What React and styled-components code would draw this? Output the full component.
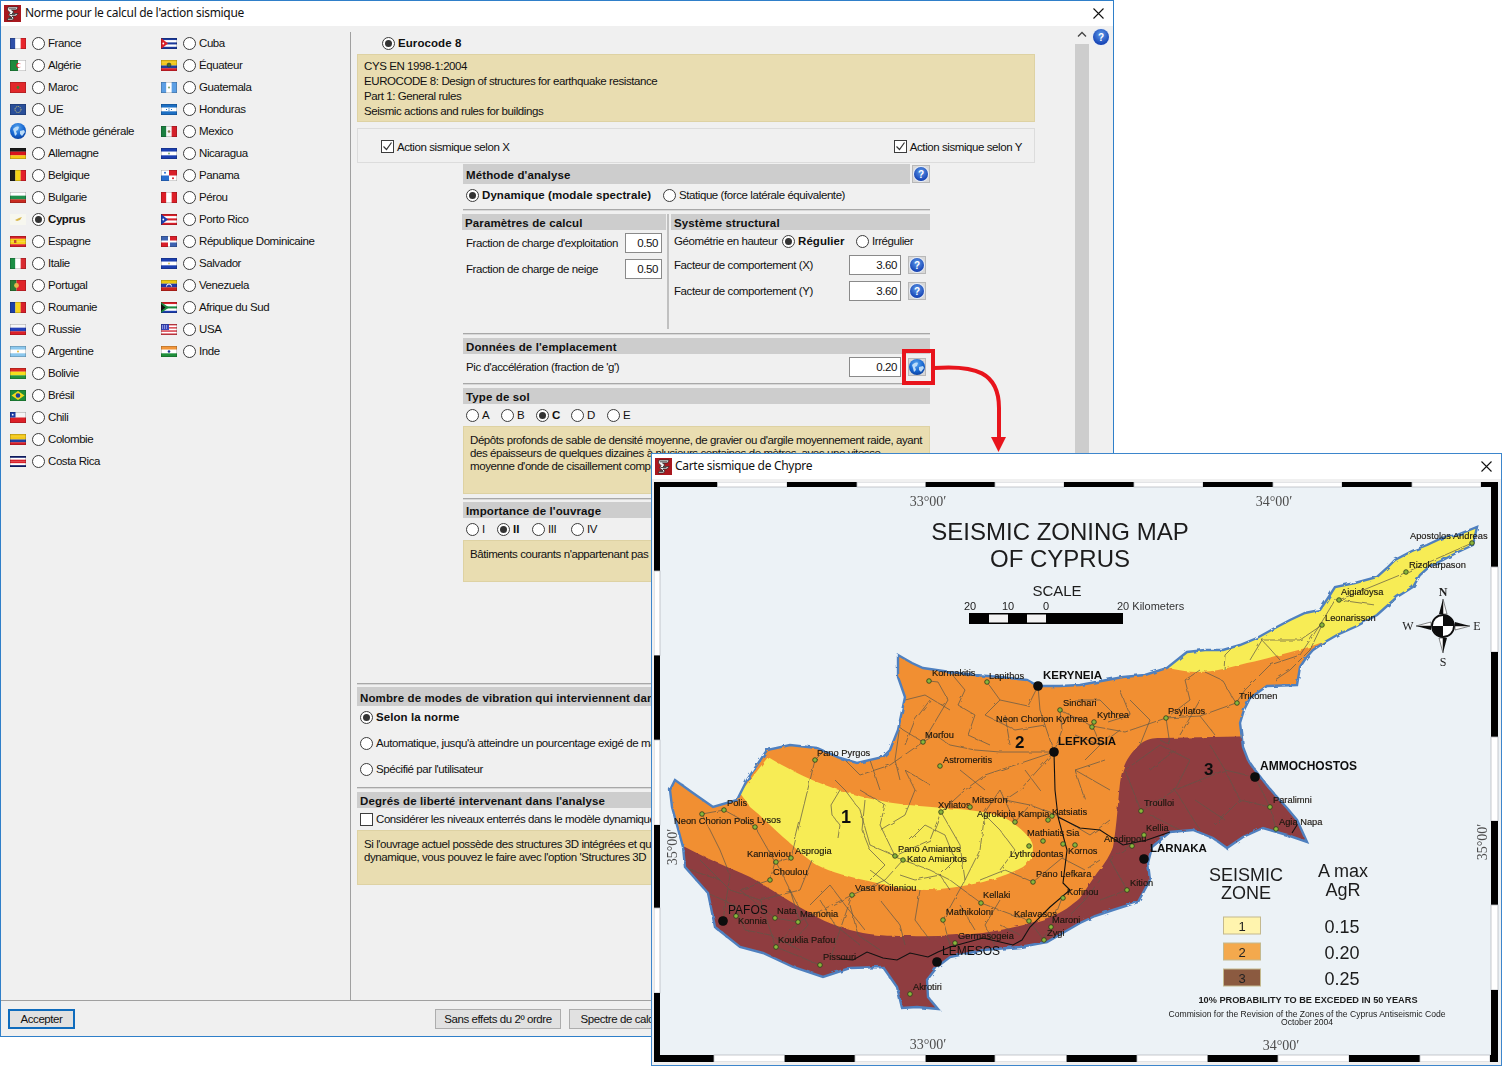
import React from 'react';
import styled, { createGlobalStyle } from 'styled-components';

const GlobalStyle = createGlobalStyle`
	html, body {
		margin: 0;
		padding: 0;
		background: #fff;
	}
	* {
		box-sizing: border-box;
	}
`;

const uiFont = `'Liberation Sans', Arial, sans-serif`;

const Desktop = styled.div`
	position: relative;
	width: 1502px;
	height: 1066px;
	overflow: hidden;
	background: #fff;
	font-family: ${uiFont};
	font-size: 11.5px;
	letter-spacing: -0.42px;
	color: #111;
`;
const MainWindow = styled.div`
	width: 1114px;
	height: 1037px;
	display: flex;
	flex-direction: column;
	border: 1px solid #2f7fc9;
	background: #f0f0f0;
`;
const TitleBar = styled.div`
	flex: none;
	height: ${(p) => p.$h}px;
	display: flex;
	align-items: center;
	gap: ${(p) => p.$gap ?? 4}px;
	padding: 0 ${(p) => p.$pr}px 0 3px;
	background: #fff;
`;
const TitleText = styled.div`
	flex: 1;
	padding-bottom: 2px;
	font-family: 'Noto Sans', sans-serif;
	font-size: 12px;
	letter-spacing: -0.3px;
	color: #111;
`;
const Body = styled.div`
	flex: 1;
	display: flex;
	min-height: 0;
`;
const CountryPane = styled.div`
	flex: none;
	width: 350px;
	margin-top: 6px;
	padding-left: 9px;
	display: flex;
	border-right: 1px solid #a0a0a0;
`;
const CountryColumn = styled.div`
	width: 151px;
	display: flex;
	flex-direction: column;
`;
const FlagBox = styled.svg`
	flex: none;
	width: 16px;
	height: ${(p) => p.$h}px;
	margin: 0;
`;
const ChoiceLabel = styled.label`
	flex: none;
	display: flex;
	align-items: center;
	gap: 3px;
	width: ${(p) => (p.$w ? `${p.$w}px` : 'auto')};
	font-weight: ${(p) => (p.$on ? 700 : 400)};
	letter-spacing: ${(p) => (p.$on ? '0.08px' : 'inherit')};
	white-space: nowrap;
`;
const CountryRow = styled.div`
	height: 22px;
	display: flex;
	align-items: center;
	gap: 6px;
	white-space: nowrap;
	${ChoiceLabel} {
		letter-spacing: -0.42px;
	}
`;
const RadioDot = styled.span`
	flex: none;
	position: relative;
	width: 13px;
	height: 13px;
	border: 1px solid #3c3c3c;
	border-radius: 50%;
	background: #fff;
	&::after {
		content: '';
		display: ${(p) => (p.$on ? 'block' : 'none')};
		position: absolute;
		inset: 2px;
		border-radius: 50%;
		background: #333;
	}
`;
const CheckBoxBox = styled.span`
	flex: none;
	width: 13px;
	height: 13px;
	border: 1px solid #3c3c3c;
	background: #fff;
	display: flex;
`;
const SettingsPane = styled.div`
	flex: 1;
	min-width: 0;
	display: flex;
`;
const Content = styled.div`
	width: 724px;
	flex: none;
	padding-top: 6px;
	overflow: hidden;
`;
const NormRow = styled.div`
	height: 22px;
	padding-left: 31px;
	display: flex;
	align-items: center;
`;
const Note = styled.div`
	height: ${(p) => p.$h}px;
	padding: ${(p) => p.$top ?? 7}px 6px 0;
	background: #e9ddb1;
	border: 1px solid #ded2a3;
	line-height: ${(p) => p.$line ?? 13}px;
	white-space: pre-line;
`;
const Wide = styled.div`
	margin-left: 6px;
	width: 678px;
`;
const DirectionBox = styled.div`
	height: 35px;
	margin-top: 6px;
	padding: 2px 12px 0 23px;
	display: flex;
	align-items: center;
	justify-content: space-between;
	border: 1px solid #dcdcdc;
`;
const CheckLabel = styled.label`
	display: flex;
	align-items: center;
	gap: 3px;
	white-space: nowrap;
`;
const Center = styled.div`
	margin: 1px 0 0 112px;
	width: 467px;
`;
const HeaderRow = styled.div`
	display: flex;
	align-items: center;
	gap: 2px;
`;
const Section = styled.div`
	flex: 1;
	height: ${(p) => p.$h ?? 16}px;
	padding: 2px 0 0 3px;
	display: flex;
	align-items: center;
	background: #cdcdcd;
	font-weight: 700;
	letter-spacing: 0.12px;
	white-space: nowrap;
	overflow: hidden;
`;
const ChoiceRow = styled.div`
	height: ${(p) => p.$h ?? 22}px;
	margin-top: ${(p) => p.$mt ?? 0}px;
	padding-left: ${(p) => p.$pl ?? 3}px;
	display: flex;
	align-items: center;
`;
const Rule = styled.div`
	height: 2px;
	margin-top: ${(p) => p.$mt}px;
	margin-bottom: ${(p) => p.$mb}px;
	background: #a8a8a8;
	border-bottom: 1px solid #d8d8d8;
`;
const TwoColumns = styled.div`
	height: 115px;
	display: flex;
`;
const LeftColumn = styled.div`
	width: 204px;
	margin-left: -1px;
`;
const RightColumn = styled.div`
	flex: 1;
	margin-left: 1px;
	padding-left: 2px;
	border-left: 2px solid #c0c0c0;
`;
const Field = styled.div`
	height: 20px;
	margin-top: ${(p) => p.$mt}px;
	padding: 0 4px 0 ${(p) => p.$pl}px;
	display: flex;
	align-items: center;
	white-space: nowrap;
`;
const FieldLabel = styled.span`
	flex: 1;
`;
const ValueInput = styled.div`
	flex: none;
	width: ${(p) => p.$w}px;
	height: 20px;
	padding-right: 3px;
	display: flex;
	align-items: center;
	justify-content: flex-end;
	background: #fff;
	border: 1px solid #8a8a8a;
`;
const IconButton = styled.button`
	flex: none;
	position: relative;
	width: 18px;
	height: 18px;
	margin-left: ${(p) => p.$ml ?? 0}px;
	padding: 0;
	display: flex;
	align-items: center;
	justify-content: center;
	background: #d8d8d8;
	border: 1px solid #b8b8b8;
`;
const HelpDisc = styled.span`
	width: ${(p) => p.$size ?? 14}px;
	height: ${(p) => p.$size ?? 14}px;
	border-radius: 50%;
	display: flex;
	align-items: center;
	justify-content: center;
	background: radial-gradient(circle at 50% 35%, #5f9bea, #1542b4 75%);
	box-shadow: 0 0 0 1px #e8eef8;
	color: #fff;
	font-size: 10px;
	font-weight: 700;
	letter-spacing: 0;
`;
const Highlight = styled.span`
	position: absolute;
	left: -7px;
	top: -10px;
	width: 33px;
	height: 36px;
	border: 4px solid #e8141c;
`;
const ScrollBar = styled.div`
	flex: none;
	width: 14px;
	padding-top: 18px;
	position: relative;
`;
const ScrollThumb = styled.div`
	height: 100%;
	background: #cdcdcd;
`;
const ScrollArrow = styled.svg`
	position: absolute;
	top: 5px;
	left: 2px;
`;
const SidePane = styled.div`
	flex: 1;
	padding: 3px 0 0 4px;
`;
const Footer = styled.div`
	flex: none;
	height: 36px;
	padding-left: 7px;
	display: flex;
	align-items: center;
	border-top: 1px solid #a0a0a0;
`;
const FooterButton = styled.button`
	flex: none;
	width: ${(p) => p.$w}px;
	height: 20px;
	margin-left: ${(p) => p.$ml ?? 0}px;
	padding: 0;
	background: #e1e1e1;
	border: ${(p) => (p.$primary ? '2px solid #0f6cbd' : '1px solid #adadad')};
	font: inherit;
	letter-spacing: inherit;
	color: #111;
`;
const ArrowLayer = styled.svg`
	position: absolute;
	left: 930px;
	top: 360px;
`;
const MapWindow = styled.div`
	position: absolute;
	left: 651px;
	top: 453px;
	width: 851px;
	height: 613px;
	border: 1px solid #3d86cc;
	background: #f0f0f0;
`;
const MapPane = styled.div`
	padding: 3px 0 0 2px;
`;
const MapSvg = styled.svg`
	display: block;
	font-family: ${uiFont};
	letter-spacing: 0;
`;

const v = (...c) =>
	c.map((f, i) => (
		<rect key={i} x={(i * 16) / c.length} y="0" width={16 / c.length + 0.1} height="11" fill={f} />
	));
const h = (...c) =>
	c.map((f, i) => (
		<rect key={i} x="0" y={(i * 11) / c.length} width="16" height={11 / c.length + 0.1} fill={f} />
	));

const flagArt = {
	france: v('#2f50a8', '#fff', '#e8252c'),
	algerie: (
		<>
			{v('#1f8a3d', '#fff')}
			<circle cx="8.5" cy="5.5" r="2.4" fill="#d9202a" />
			<circle cx="9.3" cy="5.5" r="1.9" fill="#fff" />
		</>
	),
	maroc: (
		<>
			{h('#e2282b')}
			<circle cx="8" cy="5.5" r="1.4" fill="#3f7f30" />
		</>
	),
	ue: (
		<>
			{h('#2a4f9a')}
			<circle cx="8" cy="5.5" r="3" fill="none" stroke="#e8d870" strokeDasharray="1 1" />
		</>
	),
	allemagne: h('#1b1b1b', '#d9141c', '#f6c815'),
	belgique: v('#1e1e1e', '#f5d416', '#e3202a'),
	bulgarie: h('#fff', '#1f8f4c', '#c92a20'),
	cyprus: (
		<>
			{h('#f7f7ef')}
			<path d="M5 6l4-2 3-1-2 3-3 1z" fill="#d9b64a" />
		</>
	),
	espagne: (
		<>
			{h('#d9202a', '#f7d21c', '#f7d21c', '#d9202a')}
			<rect x="4" y="4" width="2.4" height="3" fill="#c0492a" />
		</>
	),
	italie: v('#1d8f45', '#fff', '#d92a30'),
	portugal: (
		<>
			<rect width="6.5" height="11" fill="#2c7a35" />
			<rect x="6.5" width="9.5" height="11" fill="#e0242a" />
			<circle cx="6.5" cy="5.5" r="2.4" fill="#e5b84a" />
		</>
	),
	roumanie: v('#1c3fa8', '#f7d41c', '#d9202a'),
	russie: h('#f7f7f7', '#2440b8', '#dc2028'),
	argentine: (
		<>
			{h('#8cc8ee', '#fff', '#8cc8ee')}
			<circle cx="8" cy="5.5" r="1" fill="#e7b93c" />
		</>
	),
	bolivie: h('#dd2a24', '#f5df1e', '#23933c'),
	bresil: (
		<>
			{h('#1f8f3a')}
			<path d="M8 1l6.5 4.5L8 10 1.5 5.5z" fill="#f2d81d" />
			<circle cx="8" cy="5.5" r="2.3" fill="#1d3f98" />
		</>
	),
	chili: (
		<>
			{h('#f5f5f5', '#dd2028')}
			<rect width="5.5" height="5.5" fill="#1f3fa8" />
			<circle cx="2.7" cy="2.7" r="0.9" fill="#fff" />
		</>
	),
	colombie: h('#f4c91c', '#f4c91c', '#1f3fa0', '#d9202a'),
	costarica: h('#12206f', '#fff', '#d9202a', '#d9202a', '#fff', '#12206f'),
	cuba: (
		<>
			{h('#1c3a9c', '#fff', '#1c3a9c', '#fff', '#1c3a9c')}
			<path d="M0 0l7 5.5L0 11z" fill="#dd2028" />
			<circle cx="2.3" cy="5.5" r="0.9" fill="#fff" />
		</>
	),
	equateur: (
		<>
			{h('#f2c81c', '#f2c81c', '#1f3fa0', '#d9202a')}
			<circle cx="8" cy="5" r="2" fill="#3a6e3a" stroke="#222" strokeWidth="0.5" />
		</>
	),
	guatemala: (
		<>
			{v('#5c9fe4', '#fff', '#5c9fe4')}
			<circle cx="8" cy="5.5" r="1.1" fill="#88a878" />
		</>
	),
	honduras: (
		<>
			{h('#1c6fc4', '#fff', '#1c6fc4')}
			<path d="M5 5.5h1M7.5 4.8h1M7.5 6.3h1M10 5.5h1" stroke="#1c6fc4" />
		</>
	),
	mexico: (
		<>
			{v('#1b7f3f', '#f6f6f6', '#d3202a')}
			<circle cx="8" cy="5.5" r="1.3" fill="#8a7a4a" />
		</>
	),
	nicaragua: (
		<>
			{h('#1c3fb0', '#fff', '#1c3fb0')}
			<circle cx="8" cy="5.5" r="1" fill="#88b070" />
		</>
	),
	panama: (
		<>
			<rect width="16" height="11" fill="#fff" />
			<rect x="8" width="8" height="5.5" fill="#d9202a" />
			<rect y="5.5" width="8" height="5.5" fill="#2a6fd0" />
			<circle cx="4" cy="2.8" r="1" fill="#2a6fd0" />
			<circle cx="12" cy="8.2" r="1" fill="#d9202a" />
		</>
	),
	perou: v('#dd2028', '#fff', '#dd2028'),
	portorico: (
		<>
			{h('#d9202a', '#fff', '#d9202a', '#fff', '#d9202a')}
			<path d="M0 0l7 5.5L0 11z" fill="#1c3fb0" />
			<circle cx="2.3" cy="5.5" r="0.9" fill="#fff" />
		</>
	),
	dominicaine: (
		<>
			<rect width="16" height="11" fill="#fff" />
			<rect width="7" height="4.5" fill="#3d62b0" />
			<rect x="9" width="7" height="4.5" fill="#d9202a" />
			<rect y="6.5" width="7" height="4.5" fill="#d9202a" />
			<rect x="9" y="6.5" width="7" height="4.5" fill="#3d62b0" />
		</>
	),
	salvador: (
		<>
			{h('#1c3fb0', '#fff', '#1c3fb0')}
			<circle cx="8" cy="5.5" r="1" fill="#d8c860" />
		</>
	),
	venezuela: (
		<>
			{h('#eac712', '#2038a8', '#c8241c')}
			<path d="M5.5 6.5a2.5 2.5 0 015 0" fill="none" stroke="#fff" />
		</>
	),
	afrique: (
		<>
			{h('#d9202a', '#fff', '#1b8a3f', '#fff', '#1c3fb0')}
			<path d="M0 0l8 5.5-8 5.5z" fill="#1b8a3f" />
			<path d="M0 2l4.5 3.5L0 9z" fill="#111" />
		</>
	),
	usa: (
		<>
			{h('#d9404a', '#fff', '#d9404a', '#fff', '#d9404a', '#fff', '#d9404a')}
			<rect width="8" height="6" fill="#3845b8" />
			<path d="M1 2h6M1 4h6" stroke="#dfe3ff" strokeDasharray="1 1" />
		</>
	),
	inde: (
		<>
			{h('#f2963a', '#fff', '#1f8f3a')}
			<circle cx="8" cy="5.5" r="1.3" fill="#1c2f90" />
		</>
	),
};

const Flag = ({ kind }) => (
	<FlagBox $h={11} viewBox="0 0 16 11">
		{flagArt[kind]}
		{kind !== 'cyprus' && (
			<rect x="0.25" y="0.25" width="15.5" height="10.5" fill="none" stroke="#000" strokeOpacity="0.35" strokeWidth="0.5" />
		)}
	</FlagBox>
);

const Globe = () => (
	<FlagBox $h={16} viewBox="0 0 16 16">
		<defs>
			<radialGradient id="globeSea" cx="45%" cy="30%" r="75%">
				<stop offset="0" stopColor="#5aa8f0" />
				<stop offset="0.6" stopColor="#1766d0" />
				<stop offset="1" stopColor="#0a3c98" />
			</radialGradient>
		</defs>
		<circle cx="8" cy="8" r="8" fill="url(#globeSea)" />
		<path d="M3 6c2-2 4-3 6-2l-1 3-2 1 1 3-2 2-1-4zM10 8l4-1 1 2-3 4-2-2z" fill="#bcdcf8" />
	</FlagBox>
);

const Choice = ({ on, w, children }) => (
	<ChoiceLabel $on={on} $w={w}>
		<RadioDot $on={on} />
		{children}
	</ChoiceLabel>
);

const Check = ({ on, children }) => (
	<CheckLabel>
		<CheckBoxBox>
			{on && (
				<svg width="11" height="11" viewBox="0 0 11 11">
					<path d="M1.5 5.5l3 3 5-7" fill="none" stroke="#333" strokeWidth="1.2" />
				</svg>
			)}
		</CheckBoxBox>
		{children}
	</CheckLabel>
);

const Help = ({ ml }) => (
	<IconButton $ml={ml}>
		<HelpDisc>?</HelpDisc>
	</IconButton>
);

const AppIcon = () => (
	<svg width="17" height="17" viewBox="0 0 17 17" style={{ flex: 'none' }}>
		<rect width="17" height="17" fill="#a8181e" />
		<path d="M4 2h10l-1.5 3H7.5L10 7l-2 1.5h6L12 11H8l2 2-1.5 2H3l2-2.5h3L4.5 10 6 7.5 3.5 5z" fill="#f4f4f4" stroke="#222" strokeWidth="0.7" />
		<path d="M5 3.8h7M5.5 9.5h6M4.5 13.5h4" stroke="#222" strokeWidth="0.8" />
	</svg>
);

const CloseIcon = () => (
	<svg width="11" height="11" viewBox="0 0 11 11" style={{ flex: 'none' }}>
		<path d="M0.5 0.5l10 10M10.5 0.5l-10 10" stroke="#111" strokeWidth="1.1" />
	</svg>
);

const countriesLeft = [
	['france', 'France'],
	['algerie', 'Algérie'],
	['maroc', 'Maroc'],
	['ue', 'UE'],
	['globe', 'Méthode générale'],
	['allemagne', 'Allemagne'],
	['belgique', 'Belgique'],
	['bulgarie', 'Bulgarie'],
	['cyprus', 'Cyprus'],
	['espagne', 'Espagne'],
	['italie', 'Italie'],
	['portugal', 'Portugal'],
	['roumanie', 'Roumanie'],
	['russie', 'Russie'],
	['argentine', 'Argentine'],
	['bolivie', 'Bolivie'],
	['bresil', 'Brésil'],
	['chili', 'Chili'],
	['colombie', 'Colombie'],
	['costarica', 'Costa Rica'],
];
const countriesRight = [
	['cuba', 'Cuba'],
	['equateur', 'Équateur'],
	['guatemala', 'Guatemala'],
	['honduras', 'Honduras'],
	['mexico', 'Mexico'],
	['nicaragua', 'Nicaragua'],
	['panama', 'Panama'],
	['perou', 'Pérou'],
	['portorico', 'Porto Rico'],
	['dominicaine', 'République Dominicaine'],
	['salvador', 'Salvador'],
	['venezuela', 'Venezuela'],
	['afrique', 'Afrique du Sud'],
	['usa', 'USA'],
	['inde', 'Inde'],
];

const Countries = ({ list }) => (
	<CountryColumn>
		{list.map(([kind, name]) => (
			<CountryRow key={kind}>
				{kind === 'globe' ? <Globe /> : <Flag kind={kind} />}
				<Choice on={kind === 'cyprus'}>{name}</Choice>
			</CountryRow>
		))}
	</CountryColumn>
);

const coast =
	'M898 655L912 663L923 668L950 672L975 675L1000 677L1027 680L1038 686L1060 686L1080 685L1123 677L1145 675L1167 668L1187 652L1205 650L1223 650L1240 645L1257 638L1275 628L1290 620L1305 613L1320 610L1328 598L1335 587L1355 583L1377 577L1387 568L1395 560L1412 551L1427 545L1442 538L1457 535L1477 527L1473 545L1458 552L1443 560L1430 566L1420 575L1413 587L1397 597L1387 606L1377 615L1357 626L1337 635L1325 642L1313 650L1306 658L1300 667L1297 685L1267 686L1250 698L1244 710L1240 723L1243 747L1248 760L1255 770L1265 783L1277 797L1287 808L1297 820L1307 842L1287 835L1263 828L1243 837L1227 848L1213 838L1193 830L1170 832L1152 847L1148 863L1150 880L1138 902L1113 910L1095 916L1080 923L1047 942L1020 947L983 950L950 957L937 967L927 980L928 997L938 1009L917 1007L902 1008L897 987L883 967L850 968L823 977L793 967L763 953L740 947L715 927L708 893L685 867L683 847L672 807L670 790L675 780L693 793L713 807L737 800L747 780L767 750L790 745L817 748L840 758L857 763L883 757L890 750L898 730L905 697L898 677Z';

const roads = [
	'M923 742L900 728M923 742L948 700L938 682L929 681M923 742L935 735L950 745L975 750L1000 752L1054 752',
	'M950 672L965 690L958 705L975 715L968 735L990 745M987 682L1000 700L1028 706L1038 686M905 700L925 695L950 710',
	'M1038 686L1040 710L1054 752M1054 752L1062 730L1060 710L1092 726L1125 732L1166 718L1200 716L1236 703',
	'M1092 726L1100 745L1120 730M1166 718L1170 745L1160 740M1166 718L1190 700L1185 680L1200 670M1120 690L1130 715L1108 722',
	'M1236 703L1222 680L1205 672M1236 703L1245 690L1270 665L1300 655L1320 625L1335 600L1339 600L1400 575L1472 543',
	'M1322 625L1310 650L1290 670L1275 680M1322 625L1300 640L1280 640L1262 640L1250 660M1339 600L1375 605M1240 640L1225 655L1224 670M1262 640L1280 660',
	'M1054 752L1015 765L985 775L965 790L941 812M1054 752L1020 790L1005 800L1030 805',
	'M1056 815L1090 835L1110 820M1056 815L1030 805L1015 822L1000 790L985 812L980 850L965 880',
	'M941 812L930 840L895 856L903 860L885 880L852 895L840 930L830 960M941 812L960 845L965 880L943 920L950 945',
	'M895 856L870 845L860 810L845 790L835 780M895 856L880 825L885 805L860 790M903 860L930 870L950 880L981 903',
	'M981 903L1029 921L1044 940M1062 898L1051 927L1044 940M1033 882L1005 870L980 880M1033 882L1062 858',
	'M724 810L702 814L720 850L730 875L723 921M724 810L755 827L775 862L770 880L740 890',
	'M791 858L776 862L790 890L800 922M791 858L815 760M776 947L798 922L852 895M775 918L798 922M776 947L820 965',
	'M815 760L830 745L860 775L890 765L923 742M840 790L831 805L832 815L840 825L838 838M865 800L862 830L870 850L885 865L870 880',
	'M1141 811L1175 790L1225 770L1255 777M1255 777L1270 807L1276 829M1175 790L1200 830M1141 811L1125 770L1160 745',
	'M1225 770L1240 800L1270 807M1144 835L1110 860L1127 890M1127 890L1100 900M1160 745L1190 760L1175 790M1210 745L1225 770M1240 800L1215 825',
	'M700 860L730 890L760 900M760 900L776 947M740 890L775 918M690 870L720 880M760 900L800 890L812 860M810 905L830 885L845 905L865 930',
	'M880 900L900 925L905 945M920 890L915 920L930 940M1000 900L985 925L995 945M880 830L905 815L915 790L905 770L930 785M960 770L985 790',
	'M985 815L1000 830L1015 850L1000 870M870 760L880 790M900 725L895 760L900 780M1005 715L1010 745M1025 770L1040 790',
	'M910 840L925 825L945 835L955 860L940 875L915 880L900 875M870 870L890 885M940 875L950 890M1062 858L1085 870L1100 860',
	'M850 905L858 935L880 950M820 900L835 925L860 945M790 890L808 925L790 945M745 930L770 935L800 950M700 890L735 905L745 930',
	'M1000 700L985 715L1015 730L1045 725M1075 700L1100 700L1115 715M1130 700L1150 720L1140 745M1200 716L1215 735M1180 735L1200 700',
	'M930 700L915 720L905 745M1085 760L1100 745L1075 735M1075 770L1110 790M1085 800L1075 770L1105 760',
	'M1150 770L1175 750M1195 800L1225 820M1150 815L1180 830M1100 880L1085 900L1070 915M1000 925L1020 935M960 905L975 930',
];

const rail =
	'M1054 752L1055 790L1058 817L1067 850L1063 883L1070 890L1050 907L1030 927L1022 940L1013 945L983 938L950 947L938 952L928 957L910 953L897 960L883 958L867 952L853 960L840 959M1058 817L1080 828L1100 830L1123 845L1147 840L1170 832M1297 825L1292 833';

const towns = [
	[929, 681, 'Kormakitis', 932, 676], [987, 682, 'Lapithos', 989, 679], [1060, 710, 'Sinchari', 1063, 706],
	[1092, 727, 'Neon Chorion Kythrea', 996, 722], [1094, 722, 'Kythrea', 1097, 718], [1166, 718, 'Psyllatos', 1168, 714],
	[1237, 703, 'Trikomen', 1239, 699], [1322, 625, 'Leonarisson', 1325, 621], [1339, 600, 'Aigialoysa', 1341, 595],
	[1406, 572, 'Rizokarpason', 1409, 568], [1472, 543, 'Apostolos Andreas', 1410, 539], [923, 742, 'Morfou', 925, 738],
	[815, 760, 'Pano Pyrgos', 817, 756], [940, 766, 'Astromeritis', 943, 763], [724, 810, 'Polis', 727, 806],
	[702, 814, 'Neon Chorion Polis', 674, 824], [755, 827, 'Lysos', 757, 823], [776, 862, 'Kannaviou', 747, 857],
	[791, 858, 'Asprogia', 795, 854], [770, 880, 'Choulou', 773, 875], [941, 812, 'Xyliatos', 938, 808],
	[970, 807, 'Mitseron', 972, 803], [1015, 822, 'Agrokipia', 977, 817], [1048, 820, 'Kampia', 1018, 817],
	[1052, 816, 'Katsiatis', 1052, 815], [1043, 841, 'Mathiatis', 1027, 836], [1063, 844, 'Sia', 1066, 836],
	[1029, 846, 'Lythrodontas', 1010, 857], [1075, 845, 'Kornos', 1068, 854], [895, 856, 'Pano Amiantos', 898, 852],
	[903, 860, 'Kato Amiantos', 907, 862], [1033, 882, 'Pano Lefkara', 1036, 877], [981, 903, 'Kellaki', 983, 898],
	[1063, 898, 'Kofinou', 1067, 895], [852, 895, 'Vasa Koilaniou', 855, 891], [943, 920, 'Mathikoloni', 946, 915],
	[1029, 921, 'Kalavasos', 1014, 917], [1051, 927, 'Maroni', 1052, 923], [1044, 940, 'Zygi', 1047, 936],
	[955, 943, 'Germasogeia', 958, 939], [736, 916, 'Konnia', 738, 924], [775, 918, 'Nata', 777, 914],
	[798, 922, 'Mamonia', 800, 917], [776, 947, 'Kouklia Pafou', 778, 943], [820, 965, 'Pissouri', 823, 960],
	[910, 994, 'Akrotiri', 913, 990], [1141, 811, 'Troulloi', 1144, 806], [1270, 807, 'Paralimni', 1273, 803],
	[1276, 829, 'Agia Napa', 1279, 825], [1144, 835, 'Kellia', 1146, 831], [1132, 846, 'Aradippou', 1104, 842],
	[1127, 890, 'Kition', 1130, 886],
];

const cities = [
	[1038, 686, 'KERYNEIA', 1043, 679, 700, 11.5],
	[1054, 752, 'LEFKOSIA', 1058, 745, 700, 11.5],
	[1255, 777, 'AMMOCHOSTOS', 1260, 770, 700, 12],
	[1144, 859, 'LARNAKA', 1150, 852, 700, 11.5],
	[937, 962, 'LEMESOS', 942, 955, 400, 12],
	[723, 921, 'PAFOS', 728, 914, 400, 12],
];

const Band = ({ segments, x, y, w, ht, horizontal }) =>
	segments.map(([a, b], i) =>
		horizontal ? (
			<rect key={i} x={a} y={y} width={b - a} height={ht} fill={i % 2 ? '#fff' : '#000'} stroke={i % 2 ? '#b8bcc0' : 'none'} strokeWidth="0.8" />
		) : (
			<rect key={i} x={x} y={a} width={w} height={b - a} fill={i % 2 ? '#fff' : '#000'} stroke={i % 2 ? '#b8bcc0' : 'none'} strokeWidth="0.8" />
		)
	);

const pairs = (...n) => n.slice(1).map((b, i) => [n[i], b]);

const Compass = () => (
	<g>
		<path d="M1443 599l-4 15h4zM1470 626l-15-4v4zM1443 653l4-15h-4zM1416 626l15 4v-4z" fill="#111" />
		<path d="M1443 599l4 15h-4zM1470 626l-15 4v-4zM1443 653l-4-15h4zM1416 626l15-4v4z" fill="#fff" stroke="#111" strokeWidth="0.5" />
		<circle cx="1443" cy="626" r="11" fill="#fff" stroke="#111" strokeWidth="1.8" />
		<path d="M1443 626V615A11 11 0 011454 626zM1443 626v11a11 11 0 01-11-11z" fill="#111" />
		<g fontFamily="'Liberation Serif', serif" fontSize="12" fill="#222">
			<text x="1443" y="596" textAnchor="middle" fontWeight="700">N</text>
			<text x="1443" y="666" textAnchor="middle">S</text>
			<text x="1408" y="630" textAnchor="middle">W</text>
			<text x="1477" y="630" textAnchor="middle">E</text>
		</g>
	</g>
);

const SeismicMap = () => (
	<MapSvg width="846" height="580" viewBox="654 482 846 580">
		<defs>
			<clipPath id="island"><path d={coast} /></clipPath>
			<filter id="soft" x="0" y="0" width="100%" height="100%">
				<feGaussianBlur stdDeviation="0.3" />
			</filter>
			<filter id="rough" x="-2%" y="-2%" width="104%" height="104%">
				<feTurbulence type="fractalNoise" baseFrequency="0.15" numOctaves="2" seed="4" />
				<feDisplacementMap in="SourceGraphic" scale="3" />
			</filter>
		</defs>
		<rect x="654" y="482" width="846" height="580" fill="#ecf2f6" />
		<g filter="url(#soft)">
			<Band horizontal y={482} ht={5} segments={pairs(654, 717.6, 787, 857, 925.7, 995, 1064, 1134, 1203, 1273, 1342, 1412, 1481, 1498)} />
			<Band horizontal y={1055} ht={7} segments={pairs(654, 714, 784.7, 855, 925.7, 995, 1066.7, 1137, 1207.7, 1278, 1349, 1420, 1490, 1498)} />
			<Band x={654} w={6} segments={pairs(482, 571, 655.5, 740, 825, 908, 993, 1062)} />
			<Band x={1491} w={7} segments={pairs(482, 567, 652, 737, 821, 905, 990, 1062)} />

			<g filter="url(#rough)">
				<path d={coast} fill="#f18f33" />
				<g clipPath="url(#island)">
					<path d="M768 757C790 770 810 780 833 788C860 797 880 801 893 803C930 808 960 808 983 812C1000 815 1008 819 1013 823C1025 832 1033 840 1033 847C1033 857 1030 862 1023 867C1010 874 995 879 983 882C960 887 945 889 927 890C905 890 890 886 877 883C850 877 830 872 817 865C805 858 795 847 783 837C770 825 760 815 750 807L740 793Z" fill="#f7ec55" />
					<path d="M1168 668C1178 670 1188 672 1197 672C1215 672 1232 667 1247 663C1262 660 1275 656 1287 653C1300 650 1312 646 1323 642L1500 600L1500 500L1150 500Z" fill="#f7ec55" />
					<path d="M660 838L685 847C705 858 730 868 750 877C770 888 790 902 810 913C830 925 845 929 863 933C880 936 895 936 910 936C935 937 960 935 983 933C1005 930 1030 924 1050 917C1062 913 1072 905 1080 898L1097 873C1106 862 1110 855 1113 847C1117 825 1118 800 1120 783C1122 765 1130 752 1143 742C1150 738 1155 738 1163 738L1320 735L1320 1020L660 1020Z" fill="#8f3d40" />
					{roads.map((d, i) => (
						<path key={i} d={d} fill="none" stroke="#5f5848" strokeOpacity="0.8" strokeWidth="0.9" />
					))}
				</g>
				<path d={coast} fill="none" stroke="#4f80bf" strokeWidth="2.4" />
			</g>
			<path d={rail} fill="none" stroke="#111" strokeWidth="1.1" />

			{towns.map(([cx, cy, name, x, y]) => (
				<g key={name}>
					<circle cx={cx} cy={cy} r="2.3" fill="#8ab53a" stroke="#2a3a1a" strokeWidth="0.8" />
					<text x={x} y={y} fontSize="9.3" fill="#1b1710" stroke="#1b1710" strokeWidth="0.15">{name}</text>
				</g>
			))}
			{cities.map(([cx, cy, name, x, y, weight, size]) => (
				<g key={name}>
					<circle cx={cx} cy={cy} r="4.8" fill="#070707" />
					<text x={x} y={y} fontSize={size} fontWeight={weight} fill="#111">{name}</text>
				</g>
			))}
			<g fontWeight="700" fill="#111">
				<text x="841" y="823" fontSize="18">1</text>
				<text x="1015" y="748" fontSize="17">2</text>
				<text x="1204" y="775" fontSize="17">3</text>
			</g>

			<g fill="#1c1c1c" textAnchor="middle">
				<text x="1060" y="540" fontSize="24">SEISMIC ZONING MAP</text>
				<text x="1060" y="567" fontSize="24">OF CYPRUS</text>
				<text x="1057" y="596" fontSize="15">SCALE</text>
				<text x="970" y="610" fontSize="11">20</text>
				<text x="1008" y="610" fontSize="11">10</text>
				<text x="1046" y="610" fontSize="11">0</text>
				<text x="1246" y="881" fontSize="18">SEISMIC</text>
				<text x="1246" y="899" fontSize="18">ZONE</text>
				<text x="1343" y="877" fontSize="18">A max</text>
				<text x="1343" y="896" fontSize="18">AgR</text>
				<text x="1342" y="933" fontSize="18">0.15</text>
				<text x="1342" y="959" fontSize="18">0.20</text>
				<text x="1342" y="985" fontSize="18">0.25</text>
				<text x="1308" y="1003" fontSize="9.2" fontWeight="700">10% PROBABILITY TO BE EXCEDED IN 50 YEARS</text>
				<text x="1307" y="1017" fontSize="8.6">Commision for the Revision of the Zones of the Cyprus Antiseismic Code</text>
				<text x="1307" y="1025" fontSize="8.6">October 2004</text>
			</g>
			<text x="1117" y="610" fontSize="11" fill="#333">20 Kilometers</text>
			<g>
				<rect x="969" y="613" width="154" height="11" fill="#000" />
				<rect x="989" y="614.5" width="19" height="8" fill="#f2f2f2" />
				<rect x="1027" y="614.5" width="19" height="8" fill="#f2f2f2" />
			</g>
			{[['#fff4ae', '1', 917], ['#f4a94e', '2', 943], ['#8b5a41', '3', 969]].map(([fill, label, y]) => (
				<g key={label}>
					<rect x="1223.5" y={y} width="37" height="17" fill={fill} stroke="#c4b98e" />
					<text x="1242" y={y + 13.5} fontSize="13" textAnchor="middle" fill="#222">{label}</text>
				</g>
			))}

			<g fontFamily="'Liberation Serif', serif" fontSize="14" fill="#4d4d4d" textAnchor="middle">
				<text x="928" y="506">33°00′</text>
				<text x="1274" y="506">34°00′</text>
				<text x="928" y="1049">33°00′</text>
				<text x="1281" y="1050">34°00′</text>
				<text transform="translate(677 847) rotate(-90)">35°00′</text>
				<text transform="translate(1487 842) rotate(-90)">35°00′</text>
			</g>
			<Compass />
		</g>
	</MapSvg>
);

const App = () => (
	<Desktop>
		<GlobalStyle />
		<MainWindow>
			<TitleBar $h={25} $pr={9}>
				<AppIcon />
				<TitleText>Norme pour le calcul de l'action sismique</TitleText>
				<CloseIcon />
			</TitleBar>
			<Body>
				<CountryPane>
					<Countries list={countriesLeft} />
					<Countries list={countriesRight} />
				</CountryPane>
				<SettingsPane>
					<Content>
						<NormRow>
							<Choice on>Eurocode 8</Choice>
						</NormRow>
						<Wide>
							<Note $h={68} $top={4} $line={15}>
								{`CYS EN 1998-1:2004
EUROCODE 8: Design of structures for earthquake resistance
Part 1: General rules
Seismic actions and rules for buildings`}
							</Note>
							<DirectionBox>
								<Check on>Action sismique selon X</Check>
								<Check on>Action sismique selon Y</Check>
							</DirectionBox>
						</Wide>
						<Center>
							<HeaderRow>
								<Section $h={20}>Méthode d'analyse</Section>
								<Help />
							</HeaderRow>
							<ChoiceRow>
								<Choice on w={197}>Dynamique (modale spectrale)</Choice>
								<Choice>Statique (force latérale équivalente)</Choice>
							</ChoiceRow>
							<Rule $mt={3} $mb={3} />
							<TwoColumns>
								<LeftColumn>
									<Section>Paramètres de calcul</Section>
									<Field $mt={3} $pl={4}>
										<FieldLabel>Fraction de charge d'exploitation</FieldLabel>
										<ValueInput $w={37}>0.50</ValueInput>
									</Field>
									<Field $mt={6} $pl={4}>
										<FieldLabel>Fraction de charge de neige</FieldLabel>
										<ValueInput $w={37}>0.50</ValueInput>
									</Field>
								</LeftColumn>
								<RightColumn>
									<Section>Système structural</Section>
									<ChoiceRow $h={20} $mt={1} $pl={3}>
										<FieldLabel>Géométrie en hauteur</FieldLabel>
										<Choice on w={74}>Régulier</Choice>
										<Choice w={74}>Irrégulier</Choice>
									</ChoiceRow>
									<Field $mt={4} $pl={3}>
										<FieldLabel>Facteur de comportement (X)</FieldLabel>
										<ValueInput $w={52}>3.60</ValueInput>
										<Help ml={7} />
									</Field>
									<Field $mt={6} $pl={3}>
										<FieldLabel>Facteur de comportement (Y)</FieldLabel>
										<ValueInput $w={52}>3.60</ValueInput>
										<Help ml={7} />
									</Field>
								</RightColumn>
							</TwoColumns>
							<Rule $mt={4} $mb={3} />
							<Section>Données de l'emplacement</Section>
							<Field $mt={3} $pl={3}>
								<FieldLabel>Pic d'accélération (fraction de 'g')</FieldLabel>
								<ValueInput $w={52}>0.20</ValueInput>
								<IconButton $ml={7}>
									<Globe />
									<Highlight />
								</IconButton>
							</Field>
							<Rule $mt={6} $mb={3} />
							<Section>Type de sol</Section>
							<ChoiceRow>
								<Choice w={35}>A</Choice>
								<Choice w={35}>B</Choice>
								<Choice on w={35}>C</Choice>
								<Choice w={36}>D</Choice>
								<Choice>E</Choice>
							</ChoiceRow>
							<Note $h={68}>
								{`Dépôts profonds de sable de densité moyenne, de gravier ou d'argile moyennement raide, ayant
des épaisseurs de quelques dizaines à plusieurs centaines de mètres, avec une vitesse
moyenne d'onde de cisaillement comprise`}
							</Note>
							<Rule $mt={4} $mb={2} />
							<Section>Importance de l'ouvrage</Section>
							<ChoiceRow>
								<Choice w={31}>I</Choice>
								<Choice on w={35}>II</Choice>
								<Choice w={39}>III</Choice>
								<Choice>IV</Choice>
							</ChoiceRow>
							<Note $h={42}>Bâtiments courants n'appartenant pas aux autres</Note>
						</Center>
						<Wide>
							<Rule $mt={101} $mb={2} />
							<Section $h={19}>Nombre de modes de vibration qui interviennent dans</Section>
							<ChoiceRow>
								<Choice on>Selon la norme</Choice>
							</ChoiceRow>
							<ChoiceRow $mt={4}>
								<Choice>Automatique, jusqu'à atteindre un pourcentage exigé de masse</Choice>
							</ChoiceRow>
							<ChoiceRow $mt={4}>
								<Choice>Spécifié par l'utilisateur</Choice>
							</ChoiceRow>
							<Rule $mt={7} $mb={3} />
							<Section>Degrés de liberté intervenant dans l'analyse</Section>
							<ChoiceRow>
								<Check>Considérer les niveaux enterrés dans le modèle dynamique</Check>
							</ChoiceRow>
							<Note $h={55}>
								{`Si l'ouvrage actuel possède des structures 3D intégrées et que
dynamique, vous pouvez le faire avec l'option 'Structures 3D`}
							</Note>
						</Wide>
					</Content>
					<ScrollBar>
						<ScrollArrow width="10" height="7" viewBox="0 0 10 7">
							<path d="M1 5.5l4-4 4 4" fill="none" stroke="#444" strokeWidth="1.3" />
						</ScrollArrow>
						<ScrollThumb />
					</ScrollBar>
					<SidePane>
						<HelpDisc as="div" $size={16}>?</HelpDisc>
					</SidePane>
				</SettingsPane>
			</Body>
			<Footer>
				<FooterButton $w={67} $primary>Accepter</FooterButton>
				<FooterButton $w={126} $ml={360}>Sans effets du 2º ordre</FooterButton>
				<FooterButton $w={104} $ml={8}>Spectre de calcul</FooterButton>
			</Footer>
		</MainWindow>
		<ArrowLayer width="90" height="100" viewBox="930 360 90 100">
			<path d="M934 368C975 365 999 372 999 408L999 438" fill="none" stroke="#e8141c" strokeWidth="4" />
			<path d="M991 437h15l-7.5 15z" fill="#e8141c" />
		</ArrowLayer>
		<MapWindow>
			<TitleBar $h={25} $pr={9} $gap={3}>
				<AppIcon />
				<TitleText>Carte sismique de Chypre</TitleText>
				<CloseIcon />
			</TitleBar>
			<MapPane>
				<SeismicMap />
			</MapPane>
		</MapWindow>
	</Desktop>
);

export default App;
